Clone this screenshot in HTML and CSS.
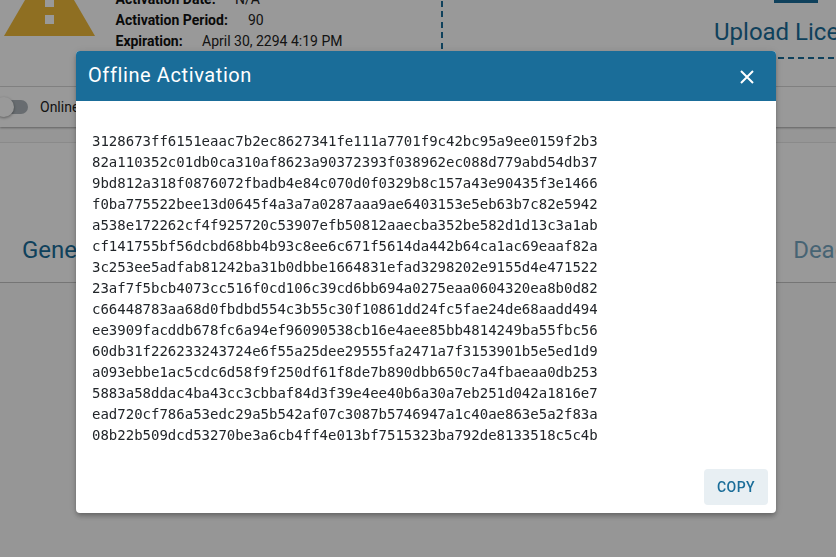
FILE: index.html
```html
<!DOCTYPE html>
<html lang="en">
<head>
<meta charset="utf-8">
<title>Offline Activation</title>
<link rel="stylesheet" href="styles.css">
</head>
<body>
<main class="page">
  <section class="status">
    <svg class="warn" viewBox="0 0 100 60" width="100" height="60" aria-hidden="true">
      <path d="M49.5 -42 L95 36 H4 Z" fill="#eeb93a"/>
      <rect x="45" y="-8" width="9" height="15" fill="#fff"/>
      <rect x="45" y="15" width="9" height="9" fill="#fff"/>
    </svg>
    <div class="info">
      <div class="info-row"><b class="l-date">Activation Date:</b><span>N/A</span></div>
      <div class="info-row"><b class="l-period">Activation Period:</b><span>90</span></div>
      <div class="info-row"><b class="l-exp">Expiration:</b><span>April 30, 2294 4:19 PM</span></div>
    </div>
    <div class="upload">
      <div class="upload-bar"></div>
      <div class="upload-text">Upload License</div>
    </div>
  </section>
  <section class="toggle-bar">
    <span class="switch"><span class="knob"></span></span>
    <span class="toggle-label">Online</span>
  </section>
  <section class="tabs">
    <span class="tab">General</span>
    <span class="tab tab-off">Deactivate</span>
  </section>
</main>
<div class="scrim"></div>
<div class="dialog" role="dialog">
  <header class="dialog-head">
    <h1 class="dialog-title">Offline Activation</h1>
    <svg class="close" viewBox="0 0 16 16" width="16" height="16" aria-hidden="true">
      <path d="M2 2 L14 14 M14 2 L2 14" stroke="#fff" stroke-width="2" fill="none"/>
    </svg>
  </header>
  <pre class="code">3128673ff6151eaac7b2ec8627341fe111a7701f9c42bc95a9ee0159f2b3
82a110352c01db0ca310af8623a90372393f038962ec088d779abd54db37
9bd812a318f0876072fbadb4e84c070d0f0329b8c157a43e90435f3e1466
f0ba775522bee13d0645f4a3a7a0287aaa9ae6403153e5eb63b7c82e5942
a538e172262cf4f925720c53907efb50812aaecba352be582d1d13c3a1ab
cf141755bf56dcbd68bb4b93c8ee6c671f5614da442b64ca1ac69eaaf82a
3c253ee5adfab81242ba31b0dbbe1664831efad3298202e9155d4e471522
23af7f5bcb4073cc516f0cd106c39cd6bb694a0275eaa0604320ea8b0d82
c66448783aa68d0fbdbd554c3b55c30f10861dd24fc5fae24de68aadd494
ee3909facddb678fc6a94ef96090538cb16e4aee85bb4814249ba55fbc56
60db31f226233243724e6f55a25dee29555fa2471a7f3153901b5e5ed1d9
a093ebbe1ac5cdc6d58f9f250df61f8de7b890dbb650c7a4fbaeaa0db253
5883a58ddac4ba43cc3cbbaf84d3f39e4ee40b6a30a7eb251d042a1816e7
ead720cf786a53edc29a5b542af07c3087b5746947a1c40ae863e5a2f83a
08b22b509dcd53270be3a6cb4ff4e013bf7515323ba792de8133518c5c4b</pre>
  <footer class="dialog-actions">
    <button class="copy" type="button">COPY</button>
  </footer>
</div>
</body>
</html>
```
FILE: styles.css
```css
html, body {
  margin: 0;
  height: 100%;
  overflow: hidden;
  background: #fafafa;
  font-family: Roboto, "Liberation Sans", sans-serif;
}
.page {
  height: 557px;
  overflow: hidden;
  display: flex;
  flex-direction: column;
}
.status {
  height: 86px;
  flex: none;
  display: flex;
  background: #fff;
  border-bottom: 1px solid #dcdcdc;
}
.warn {
  flex: none;
}
.info {
  margin: -11px 0 0 15.5px;
  width: 325.5px;
  font-size: 14px;
  color: #222;
  flex: none;
}
.info-row {
  height: 21px;
  line-height: 21px;
  white-space: nowrap;
}
.info-row b { font-weight: 700; display: inline-block; color: #111; }
.l-date { width: 119.5px; }
.l-period { width: 132.5px; }
.l-exp { width: 86.5px; }
.upload {
  flex: 1;
  height: 59px;
  box-sizing: border-box;
  overflow: hidden;
  white-space: nowrap;
  background-image:
    repeating-linear-gradient(to bottom, #1a6d99 0 6px, transparent 6px 10.5px),
    repeating-linear-gradient(to right, #1a6d99 0 6px, transparent 6px 10px);
  background-size: 2px 100%, 100% 2px;
  background-position: 0 1px, 7px 100%;
  background-repeat: no-repeat;
}
.upload-bar {
  width: 44px;
  height: 3px;
  background: #1a6d99;
  margin-left: 333px;
}
.upload-text {
  margin: 15px 0 0 273px;
  font-size: 24px;
  line-height: 28px;
  color: #1a6d99;
}
.toggle-bar {
  height: 40px;
  flex: none;
  display: flex;
  align-items: center;
  gap: 12px;
  background: #fff;
  box-shadow: 0 1px 2px rgba(0,0,0,.35);
  position: relative;
}
.switch {
  width: 28px;
  height: 14px;
  border-radius: 7px;
  background: #adb5bb;
  position: relative;
  flex: none;
}
.knob {
  position: absolute;
  left: -6px;
  top: -3px;
  width: 20px;
  height: 20px;
  border-radius: 50%;
  background: #fff;
  box-shadow: 0 1px 3px rgba(0,0,0,.4);
}
.toggle-label { font-size: 14px; color: #222; }
.tabs {
  flex: none;
  margin-top: 15px;
  height: 141px;
  background: #fff;
  border-top: 1px solid #e6e6e6;
  border-bottom: 1px solid #c4c4c4;
  box-sizing: border-box;
  display: flex;
  justify-content: space-between;
  align-items: flex-end;
  padding: 0 0 18px 22px;
  overflow: hidden;
  white-space: nowrap;
}
.tab { font-size: 24px; line-height: 28px; color: #1a6d99; }
.tab-off { opacity: .6; margin-right: -70px; }
.scrim {
  position: fixed;
  inset: 0;
  background: rgba(0,0,0,.4);
}
.dialog {
  position: fixed;
  left: 76px;
  top: 51px;
  width: 700px;
  height: 462px;
  background: #fff;
  border-radius: 4px;
  overflow: hidden;
  box-shadow: 0 2px 4px -1px rgba(0,0,0,.2), 0 4px 5px rgba(0,0,0,.14), 0 1px 10px rgba(0,0,0,.12);
  display: flex;
  flex-direction: column;
}
.dialog-head {
  height: 50px;
  flex: none;
  background: #1a6d99;
  display: flex;
  align-items: center;
  justify-content: space-between;
  padding: 0 21px 0 12px;
}
.dialog-title {
  margin: 0 0 2px;
  font-size: 20px;
  font-weight: 400;
  letter-spacing: .6px;
  color: #fff;
}
.close { flex: none; margin-top: 1px; }
.code {
  margin: 0;
  padding: 30px 16px 0;
  flex: 1;
  font-family: "DejaVu Sans Mono", monospace;
  font-size: 14px;
  line-height: 21px;
  color: #212529;
}
.dialog-actions {
  flex: none;
  display: flex;
  justify-content: flex-end;
  padding: 0 8px 8px;
}
.copy {
  width: 64px;
  height: 36px;
  border: 0;
  border-radius: 4px;
  background: #e8eff3;
  color: #1a6d99;
  font-family: Roboto, sans-serif;
  font-size: 14px;
  font-weight: 500;
  letter-spacing: .4px;
  padding: 0;
}
```
